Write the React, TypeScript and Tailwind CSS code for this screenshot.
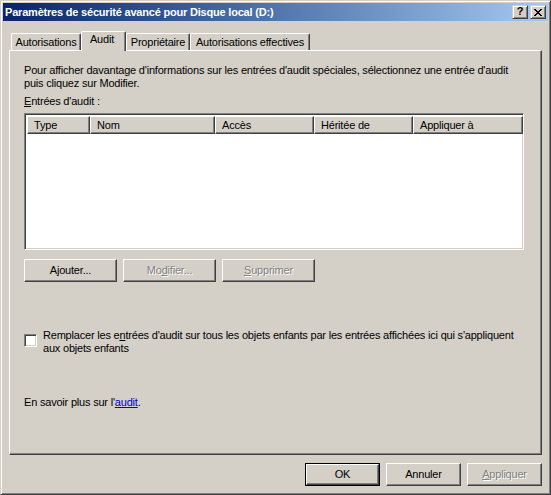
import React from "react";

const raised =
  "border border-t-white border-l-white border-r-[#404040] border-b-[#404040] shadow-[inset_-1px_-1px_0_#808080]";
const sunken =
  "border border-t-[#808080] border-l-[#808080] border-r-white border-b-white shadow-[inset_1px_1px_0_#404040,inset_-1px_-1px_0_#d4d0c8]";
const disabledText = "text-[#808080] [text-shadow:1px_1px_0_#ffffff]";

function TitleButton({ children }: { children: React.ReactNode }) {
  return (
    <div className="w-[16px] h-[14px] bg-[#d4d0c8] border border-t-[#d4d0c8] border-l-[#d4d0c8] border-r-[#404040] border-b-[#404040] shadow-[inset_1px_1px_0_#ffffff,inset_-1px_-1px_0_#808080] flex items-center justify-center text-black">
      {children}
    </div>
  );
}

function Tab({ label, width, selected }: { label: string; width: string; selected?: boolean }) {
  if (selected) {
    return (
      <div
        className={`${width} h-[20px] mb-[-1px] relative z-10 bg-[#d4d0c8] border-t border-l border-t-white border-l-white border-r border-r-[#404040] shadow-[inset_-1px_0_0_#808080] rounded-tl-[2px] rounded-tr-[2px] flex items-start justify-center pt-[1px] pr-[3px] leading-[13px] whitespace-nowrap`}
      >
        {label}
      </div>
    );
  }
  return (
    <div
      className={`${width} h-[17px] bg-[#d4d0c8] border-t border-l border-t-white border-l-white border-r border-r-[#404040] shadow-[inset_-1px_0_0_#808080] rounded-tl-[2px] rounded-tr-[2px] flex items-start justify-center pt-[2px] leading-[13px] whitespace-nowrap`}
    >
      {label}
    </div>
  );
}

function Btn({
  children,
  width,
  disabled,
  isDefault,
}: {
  children: React.ReactNode;
  width: string;
  disabled?: boolean;
  isDefault?: boolean;
}) {
  const inner = (
    <div
      className={`${isDefault ? "w-full h-full" : width + " h-[23px]"} ${raised} bg-[#d4d0c8] flex items-center justify-center leading-[13px] ${
        disabled ? disabledText : "text-black"
      }`}
    >
      {children}
    </div>
  );
  if (isDefault) {
    return <div className={`${width} h-[23px] border border-black`}>{inner}</div>;
  }
  return inner;
}

function Header({ label, width }: { label: string; width: string }) {
  return (
    <div
      className={`${width} h-[18px] shrink-0 border border-t-white border-l-white border-r-[#404040] border-b-[#404040] shadow-[inset_-1px_-1px_0_#808080] flex items-center pl-[6px] leading-[13px]`}
    >
      {label}
    </div>
  );
}

export default function App() {
  return (
    <div className="w-[551px] h-[495px] bg-[#d4d0c8] font-['Liberation_Sans',Arial,sans-serif] text-[11px] tracking-[-0.2px] text-black select-none">
      <div className="w-full h-full flex flex-col p-[2px] border border-t-[#d4d0c8] border-l-[#d4d0c8] border-r-[#404040] border-b-[#404040] shadow-[inset_1px_1px_0_#ffffff,inset_-1px_-1px_0_#808080]">
        {/* Title bar */}
        <div className="h-[18px] shrink-0 flex items-center pl-[2px] pr-[2px] bg-gradient-to-r from-[#0a246a] to-[#a6caf0]">
          <span className="font-bold text-white leading-[13px]">
            Paramètres de sécurité avancé pour Disque local (D:)
          </span>
          <div className="ml-auto flex gap-[2px]">
            <TitleButton>
              <span className="font-bold text-[11px] leading-[11px] mt-[-1px] tracking-normal">?</span>
            </TitleButton>
            <TitleButton>
              <svg width="8" height="7" viewBox="0 0 8 7" shapeRendering="crispEdges">
                <path
                  fill="#000"
                  d="M0 0h2v1h-2z M6 0h2v1h-2z M1 1h2v1h-2z M5 1h2v1h-2z M2 2h4v1h-4z M3 3h2v1h-2z M2 4h4v1h-4z M1 5h2v1h-2z M5 5h2v1h-2z M0 6h2v1h-2z M6 6h2v1h-2z"
                />
              </svg>
            </TitleButton>
          </div>
        </div>

        {/* Body */}
        <div className="flex-1 flex flex-col px-[6px]">
          {/* Tabs */}
          <div className="mt-[10px] h-[19px] flex items-end pl-[2px]">
            <Tab label="Autorisations" width="w-[70px]" />
            <Tab label="Audit" width="w-[45px]" selected />
            <Tab label="Propriétaire" width="w-[64px]" />
            <Tab label="Autorisations effectives" width="w-[120px]" />
          </div>

          {/* Panel */}
          <div className={`h-[405px] shrink-0 ${raised} flex flex-col pl-[14px] pt-[13px] leading-[13px]`}>
            <p>
              Pour afficher davantage d'informations sur les entrées d'audit spéciales, sélectionnez une entrée d'audit
              <br />
              puis cliquez sur Modifier.
            </p>
            <p className="mt-[5px]">
              <u>E</u>ntrées d'audit :
            </p>

            {/* List */}
            <div className={`mt-[5px] w-[500px] h-[137px] bg-white ${sunken} p-[2px] flex flex-col`}>
              <div className="flex bg-[#d4d0c8]">
                <Header label="Type" width="w-[63px]" />
                <Header label="Nom" width="w-[125px]" />
                <Header label="Accès" width="w-[99px]" />
                <Header label="Héritée de" width="w-[99px]" />
                <Header label="Appliquer à" width="w-[110px]" />
              </div>
            </div>

            {/* Buttons */}
            <div className="mt-[9px] flex gap-[6px]">
              <Btn width="w-[93px]">
                <span>
                  A<u>j</u>outer...
                </span>
              </Btn>
              <Btn width="w-[93px]" disabled>
                <span>
                  Mo<u>d</u>ifier...
                </span>
              </Btn>
              <Btn width="w-[93px]" disabled>
                <span>
                  <u>S</u>upprimer
                </span>
              </Btn>
            </div>

            {/* Checkbox */}
            <div className="mt-[47px] flex items-start gap-[6px]">
              <div className={`mt-[5px] w-[13px] h-[13px] shrink-0 bg-white ${sunken}`} />
              <p>
                Remplacer les e<u>n</u>trées d'audit sur tous les objets enfants par les entrées affichées ici qui
                s'appliquent
                <br />
                aux objets enfants
              </p>
            </div>

            <p className="mt-[41px]">
              En savoir plus sur l'
              <span className="text-[#0000cc] underline">audit</span>.
            </p>
          </div>

          {/* Bottom buttons */}
          <div className="mt-[8px] flex justify-end gap-[6px]">
            <Btn width="w-[75px]" isDefault>
              OK
            </Btn>
            <Btn width="w-[75px]">Annuler</Btn>
            <Btn width="w-[75px]" disabled>
              <span>
                <u>A</u>ppliquer
              </span>
            </Btn>
          </div>
        </div>
      </div>
    </div>
  );
}
